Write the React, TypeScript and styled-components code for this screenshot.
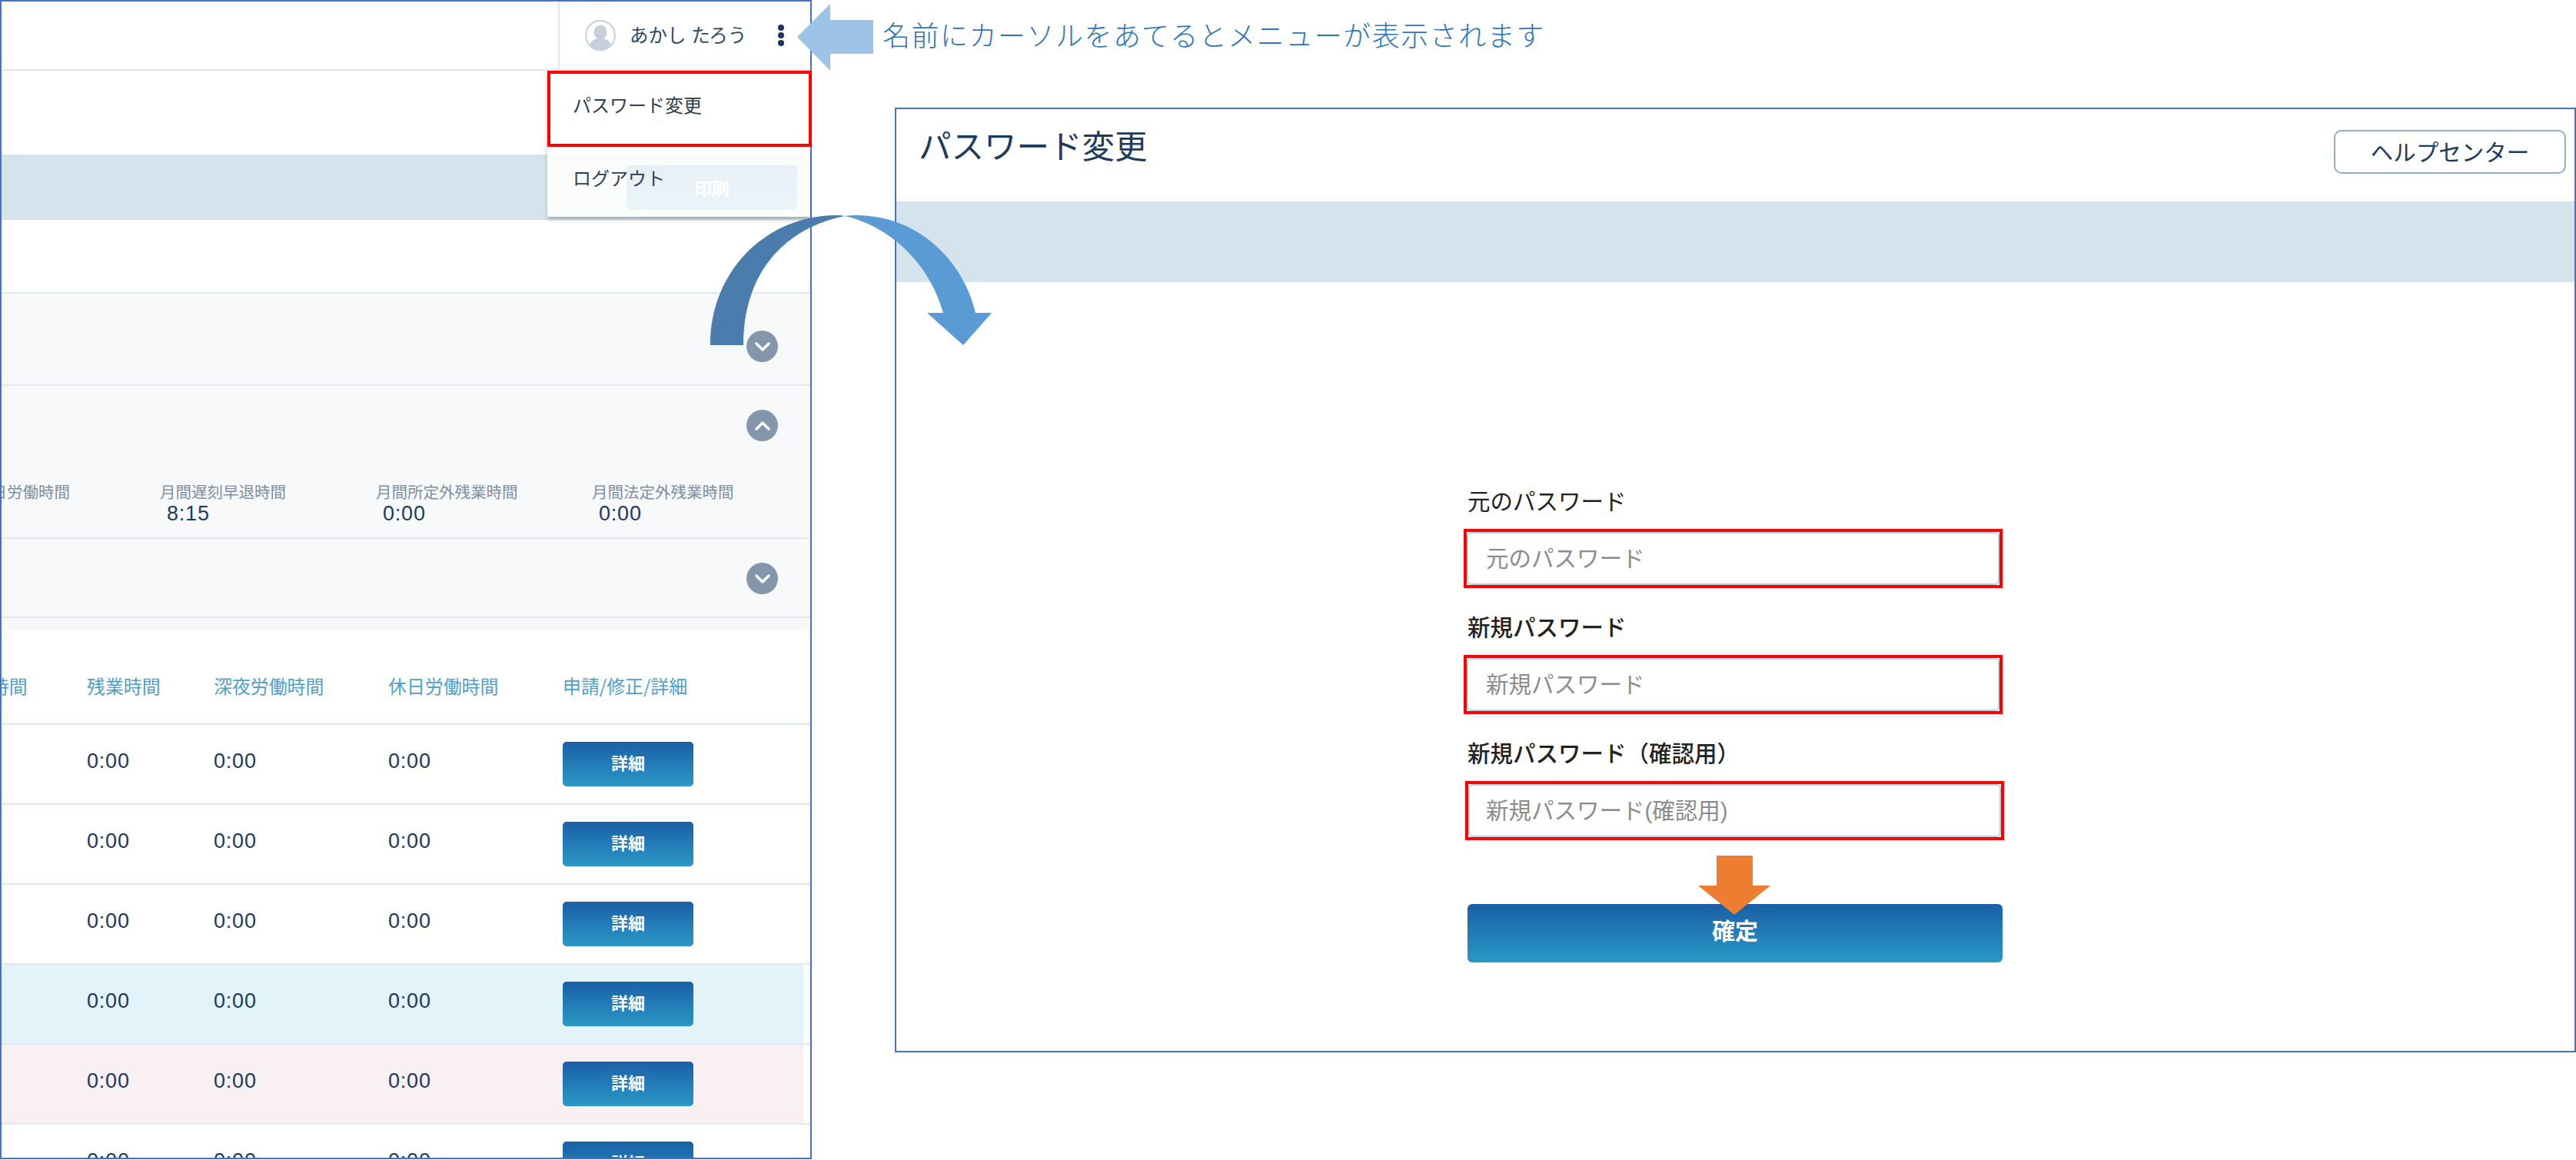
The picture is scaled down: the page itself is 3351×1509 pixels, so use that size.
import React from 'react';
import styled, { createGlobalStyle } from 'styled-components';

const FONT = '"Liberation Sans", "Noto Sans CJK JP", sans-serif';
const CJK_FONT = '"Noto Sans CJK JP", "Liberation Sans", sans-serif';
const LINE = '#e0e7ee';
const NAVY = '#1d3a5f';
const BLUE_GRADIENT = 'linear-gradient(to bottom, #1a5fa6, #2a98c6)';

const GlobalStyle = createGlobalStyle`
    html, body {
        margin: 0;
        padding: 0;
        background: #fff;
        overflow: hidden;
    }
    * {
        box-sizing: border-box;
    }
`;

const Page = styled.div`
    position: relative;
    display: flex;
    align-items: flex-start;
    width: 3351px;
    height: 1509px;
    font-family: ${FONT};
    overflow: hidden;
`;

const ScreenPanel = styled.div`
    position: relative;
    flex: none;
    width: 1056px;
    height: 1508px;
    border: 2px solid #4472c4;
`;

const Clip = styled.div`
    height: 100%;
    overflow: hidden;
`;

const Header = styled.div`
    display: flex;
    justify-content: flex-end;
    height: 90px;
    border-bottom: 2px solid ${LINE};
`;

const UserBox = styled.div`
    display: flex;
    align-items: center;
    width: 328px;
    padding-left: 33px;
    border-left: 2px solid ${LINE};
`;

const UserName = styled.span`
    margin-left: 18px;
    padding-bottom: 4px;
    font-size: 24.5px;
    color: #2f4a66;
    white-space: nowrap;
`;

const Kebab = styled.div`
    display: flex;
    flex-direction: column;
    gap: 2px;
    margin-left: 41px;
`;

const KebabDot = styled.span`
    width: 8px;
    height: 8px;
    border-radius: 50%;
    background: #17375e;
`;

const Band = styled.div`
    display: flex;
    justify-content: flex-end;
    height: 85px;
    margin-top: 109px;
    padding: 14px 17px 0 0;
    background: #d5e3ec;
`;

const PrintButton = styled.button`
    width: 222px;
    height: 58px;
    border: 0;
    border-radius: 5px;
    background: ${BLUE_GRADIENT};
    color: #fff;
    font-family: ${FONT};
    font-size: 23px;
    font-weight: 700;
`;

const Menu = styled.div`
    position: absolute;
    top: 90px;
    left: 710px;
    right: 0;
    height: 190px;
    background: rgba(255, 255, 255, 0.9);
    box-shadow: 0 4px 6px -1px rgba(60, 70, 80, 0.4);
`;

const MenuItem = styled.div<{ $active?: boolean }>`
    height: ${(p) => (p.$active ? '99px' : '91px')};
    margin-right: ${(p) => (p.$active ? '-2px' : '0')};
    padding: ${(p) => (p.$active ? '24px 0 0 29px' : '24px 0 0 33px')};
    border: ${(p) => (p.$active ? '4px solid #f00' : '0')};
    font-size: 24px;
    line-height: 36px;
    font-weight: 400;
    color: #2b3f57;
`;

const Accordions = styled.div`
    margin-top: 94px;
    background: #f7f9fb;
`;

const Accordion = styled.div<{ $height: number; $top: number }>`
    height: ${(p) => p.$height}px;
    padding-top: ${(p) => p.$top}px;
    border-top: 2px solid ${LINE};
`;

const AccordionHead = styled.div`
    display: flex;
    justify-content: flex-end;
    padding-right: 42px;
`;

const Toggle = styled.span`
    display: flex;
    align-items: center;
    justify-content: center;
    width: 41px;
    height: 41px;
    border-radius: 50%;
    background: #8496ab;
`;

const StatRow = styled.div`
    display: grid;
    grid-template-columns: repeat(4, 281px);
    margin: 54px 0 0 -75px;
`;

const StatLabel = styled.div`
    font-size: 20.5px;
    line-height: 26px;
    color: #7d8fa3;
    white-space: nowrap;
`;

const StatValue = styled.div`
    height: 30px;
    padding-left: 9px;
    margin-top: -1px;
    font-size: 27px;
    line-height: 30px;
    letter-spacing: 0.8px;
    color: ${NAVY};
`;

const Columns = styled.div`
    display: grid;
    grid-template-columns: 173px 165px 227px 227px 170px;
    align-items: center;
    margin-left: -62px;
`;

const TableHead = styled.div`
    height: 123px;
    padding-top: 57px;
    border-bottom: 2px solid ${LINE};
`;

const HeadCell = styled.div`
    font-family: ${CJK_FONT};
    font-size: 23.9px;
    line-height: 30px;
    color: #4f9fc9;
    white-space: nowrap;
`;

const Row = styled.div`
    height: 104px;
    border-bottom: 2px solid ${LINE};
`;

const RowBody = styled.div<{ $tone?: string }>`
    height: 100%;
    margin-right: 9px;
    display: flex;
    align-items: center;
    background: ${(p) => p.$tone || 'transparent'};
`;

const Time = styled.div`
    padding-bottom: 8px;
    font-size: 27px;
    letter-spacing: 0.8px;
    color: ${NAVY};
`;

const DetailButton = styled.button`
    width: 170px;
    height: 58px;
    padding: 0 0 6px;
    border: 0;
    border-radius: 5px;
    background: ${BLUE_GRADIENT};
    color: #fff;
    font-family: ${FONT};
    font-size: 22px;
    font-weight: 700;
`;

const RightColumn = styled.div`
    flex: none;
    width: 2187px;
    margin-left: 108px;
`;

const Note = styled.div`
    height: 140px;
    margin-left: -16px;
    padding-top: 22px;
    font-size: 36px;
    line-height: 52px;
    font-weight: 300;
    letter-spacing: 1.5px;
    color: #2e75b6;
    white-space: nowrap;
`;

const DialogPanel = styled.div`
    height: 1229px;
    border: 2px solid #4472c4;
`;

const DialogHead = styled.div`
    display: flex;
    justify-content: space-between;
    align-items: flex-start;
    height: 120px;
`;

const Title = styled.h1`
    margin: 20px 0 0 29px;
    font-size: 42.5px;
    line-height: 60px;
    font-weight: 400;
    color: ${NAVY};
`;

const HelpButton = styled.button`
    width: 302px;
    height: 57px;
    margin: 27px 11px 0 0;
    padding: 0 0 3px;
    border: 2px solid #8fb0c4;
    border-radius: 10px;
    background: #fff;
    font-family: ${FONT};
    font-size: 29.5px;
    color: ${NAVY};
`;

const DialogBand = styled.div`
    height: 105px;
    background: #d5e3ec;
`;

const Form = styled.form`
    width: 710px;
    margin: 266px 0 0 738px;
`;

const Field = styled.div`
    margin-bottom: 32px;
`;

const Label = styled.label<{ $strong?: boolean }>`
    display: block;
    margin: 0 0 15px 5px;
    font-size: 29.5px;
    line-height: 40px;
    font-weight: ${(p) => (p.$strong ? 500 : 400)};
    color: #222;
`;

const InputFrame = styled.div<{ $shift: number }>`
    width: 701px;
    height: 77px;
    margin-left: ${(p) => p.$shift}px;
    border: 4px solid #f00;
`;

const Input = styled.input<{ $shift: number }>`
    display: block;
    width: 100%;
    height: 100%;
    padding: 0 0 0 ${(p) => 23 - p.$shift}px;
    border: 2px solid #b9cfdd;
    border-radius: 6px;
    background: #fff;
    font-family: ${FONT};
    font-size: 29.5px;

    &::placeholder {
        color: #8c8c8c;
        opacity: 1;
    }
`;

const SubmitWrap = styled.div`
    position: relative;
    width: 696px;
    margin: 83px 0 0 5px;
`;

const SubmitButton = styled.button`
    display: block;
    width: 100%;
    height: 76px;
    padding: 0 0 10px;
    border: 0;
    border-radius: 6px;
    background: ${BLUE_GRADIENT};
    color: #fff;
    font-family: ${FONT};
    font-size: 30px;
    font-weight: 700;
`;

const OrangeArrow = styled.svg`
    position: absolute;
    left: 300px;
    top: -63px;
`;

const NameArrow = styled.svg`
    position: absolute;
    left: 1037px;
    top: 5px;
`;

const FlowArrow = styled.svg`
    position: absolute;
    left: 920px;
    top: 276px;
`;

const Chevron = ({ up }: { up?: boolean }) => (
    <svg width="20" height="14" viewBox="0 0 20 14" fill="none">
        <polyline
            points={up ? '2,11 10,3 18,11' : '2,3 10,11 18,3'}
            stroke="#fff"
            strokeWidth="3.4"
            strokeLinecap="round"
            strokeLinejoin="round"
        />
    </svg>
);

const Avatar = () => (
    <svg width="40" height="40" viewBox="0 0 40 40">
        <circle cx="20" cy="20" r="19" fill="#fff" stroke="#c5d0da" strokeWidth="2" />
        <ellipse cx="20" cy="16" rx="8.5" ry="9.5" fill="#c5d0da" />
        <path d="M6 33c1-6 7-9 14-9s13 3 14 9a19 19 0 0 1-28 0z" fill="#c5d0da" />
    </svg>
);

const STATS = [
    { label: '月間休日労働時間', value: '' },
    { label: '月間遅刻早退時間', value: '8:15' },
    { label: '月間所定外残業時間', value: '0:00' },
    { label: '月間法定外残業時間', value: '0:00' },
];

const TABLE_HEADS = ['労働時間', '残業時間', '深夜労働時間', '休日労働時間', '申請/修正/詳細'];

const ROW_TONES = ['', '', '', '#e3f3fa', '#f9f0f4', ''];

const FIELDS = [
    { label: '元のパスワード', placeholder: '元のパスワード', shift: 0, strong: false },
    { label: '新規パスワード', placeholder: '新規パスワード', shift: 0, strong: true },
    { label: '新規パスワード（確認用）', placeholder: '新規パスワード(確認用)', shift: 2, strong: true },
];

const App = () => {
    return (
        <Page>
            <GlobalStyle />
            <ScreenPanel>
                <Clip>
                    <Header>
                        <UserBox>
                            <Avatar />
                            <UserName>あかし たろう</UserName>
                            <Kebab>
                                <KebabDot />
                                <KebabDot />
                                <KebabDot />
                            </Kebab>
                        </UserBox>
                    </Header>
                    <Band>
                        <PrintButton>印刷</PrintButton>
                    </Band>
                    <Accordions>
                        <Accordion $height={120} $top={48}>
                            <AccordionHead>
                                <Toggle><Chevron /></Toggle>
                            </AccordionHead>
                        </Accordion>
                        <Accordion $height={199} $top={31}>
                            <AccordionHead>
                                <Toggle><Chevron up /></Toggle>
                            </AccordionHead>
                            <StatRow>
                                {STATS.map((stat) => (
                                    <div key={stat.label}>
                                        <StatLabel>{stat.label}</StatLabel>
                                        <StatValue>{stat.value}</StatValue>
                                    </div>
                                ))}
                            </StatRow>
                        </Accordion>
                        <Accordion $height={103} $top={31}>
                            <AccordionHead>
                                <Toggle><Chevron /></Toggle>
                            </AccordionHead>
                        </Accordion>
                        <Accordion $height={18} $top={0} />
                    </Accordions>
                    <TableHead>
                        <Columns>
                            {TABLE_HEADS.map((head) => (
                                <HeadCell key={head}>{head}</HeadCell>
                            ))}
                        </Columns>
                    </TableHead>
                    {ROW_TONES.map((tone, i) => (
                        <Row key={i}>
                            <RowBody $tone={tone}>
                                <Columns>
                                    <div />
                                    <Time>0:00</Time>
                                    <Time>0:00</Time>
                                    <Time>0:00</Time>
                                    <DetailButton>詳細</DetailButton>
                                </Columns>
                            </RowBody>
                        </Row>
                    ))}
                </Clip>
                <Menu>
                    <MenuItem $active>パスワード変更</MenuItem>
                    <MenuItem>ログアウト</MenuItem>
                </Menu>
            </ScreenPanel>
            <RightColumn>
                <Note>名前にカーソルをあてるとメニューが表示されます</Note>
                <DialogPanel>
                    <DialogHead>
                        <Title>パスワード変更</Title>
                        <HelpButton>ヘルプセンター</HelpButton>
                    </DialogHead>
                    <DialogBand />
                    <Form>
                        {FIELDS.map((field) => (
                            <Field key={field.label}>
                                <Label $strong={field.strong}>{field.label}</Label>
                                <InputFrame $shift={field.shift}>
                                    <Input $shift={field.shift} placeholder={field.placeholder} />
                                </InputFrame>
                            </Field>
                        ))}
                        <SubmitWrap>
                            <SubmitButton type="button">確定</SubmitButton>
                            <OrangeArrow width="94" height="77" viewBox="0 0 94 77">
                                <polygon points="24,0 71,0 71,39 94,39 47,77 0,39 24,39" fill="#ed7d31" />
                            </OrangeArrow>
                        </SubmitWrap>
                    </Form>
                </DialogPanel>
            </RightColumn>
            <NameArrow width="99" height="87" viewBox="0 0 99 87">
                <polygon points="0,43 43,0 43,21 99,21 99,65 43,65 43,87" fill="#9dc3e6" />
            </NameArrow>
            <FlowArrow width="375" height="178" viewBox="920 276 375 178">
                <path d="M924 449C924 350 1000 279 1090 280Q1095 280 1099 281C1020 297 967 355 967 449Z" fill="#4a7dad" />
                <path d="M1099 281Q1105 280 1115 280C1200 281 1255 345 1269 407L1290 407L1253 449L1206 407L1227 407C1210 345 1160 295 1099 281Z" fill="#5b9bd5" />
            </FlowArrow>
        </Page>
    );
};

export default App;
